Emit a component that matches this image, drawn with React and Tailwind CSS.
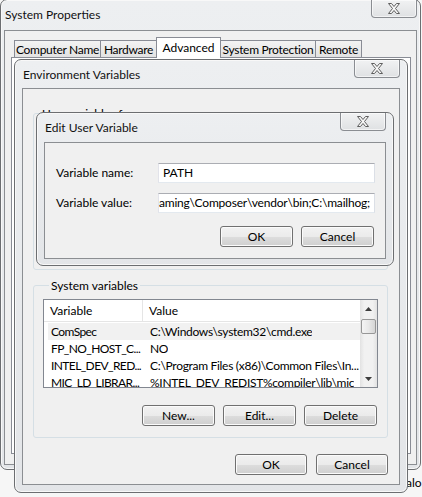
import React from "react";

const tabs = [
  { label: "Computer Name", cls: "w-[87px]" },
  { label: "Hardware", cls: "w-[57px]" },
  { label: "Advanced", cls: "w-[65px]", active: true },
  { label: "System Protection", cls: "w-[96px]" },
  { label: "Remote", cls: "w-[47px]" },
];

const rows = [
  ["ComSpec", "C:\\Windows\\system32\\cmd.exe", true],
  ["FP_NO_HOST_C...", "NO"],
  ["INTEL_DEV_RED...", "C:\\Program Files (x86)\\Common Files\\In..."],
  ["MIC_LD_LIBRAR...", "%INTEL_DEV_REDIST%compiler\\lib\\mic"],
];

const CloseGlyph = () => (
  <svg width="14" height="11" viewBox="0 0 14 11">
    <path
      d="M1.5 0.5h3l2.5 3 2.5-3h3l-4 5 4 5h-3l-2.5-3-2.5 3h-3l4-5z"
      fill="#f7f7f7"
      stroke="#5e5e5e"
      strokeWidth="1"
    />
  </svg>
);

const CloseButton = () => (
  <div className="flex h-[18px] w-[46px] items-center justify-center rounded-b-[4px] border border-t-0 border-[#8a8d92] bg-[linear-gradient(#f1f2f3,#dfe1e3)] shadow-[inset_0_0_0_1px_rgba(255,255,255,0.6)]">
    <CloseGlyph />
  </div>
);

const Win = ({ className, titleClass, title, children }) => (
  <div
    className={`absolute flex flex-col rounded-[7px] border border-[#6c6e71] bg-[linear-gradient(#edeff1,#e3e5e8)] shadow-[inset_0_0_0_1px_#f8f8f8] ${className}`}
  >
    <div className={`flex shrink-0 items-start justify-between ${titleClass}`}>
      <span className="whitespace-nowrap pl-[1px] pt-[7px] text-[12px] leading-[15px] text-[#111]">{title}</span>
      <CloseButton />
    </div>
    <div className="flex min-h-0 flex-1 flex-col border border-[#8b8e92] bg-[#f0f0f0]">{children}</div>
  </div>
);

const Btn = ({ children, className = "" }) => (
  <button
    className={`h-[21px] rounded-[3px] border border-[#707070] bg-[linear-gradient(#f2f2f2_0%,#ebebeb_50%,#dddddd_51%,#cfcfcf_100%)] text-[12px] leading-none text-black shadow-[inset_0_0_0_1px_#fbfbfb] ${className}`}
  >
    {children}
  </button>
);

const Field = ({ children, end }) => (
  <div
    className={`flex h-[20px] w-[217px] items-center overflow-hidden border border-[#abadb3] border-b-[#e3e9ef] border-l-[#e2e3ea] border-r-[#dbdfe6] bg-white px-[4px] ${end ? "justify-end tracking-[-0.2px]" : ""}`}
  >
    <span className="shrink-0 whitespace-nowrap">{children}</span>
  </div>
);

const Scrollbar = () => (
  <div className="flex w-[17px] shrink-0 flex-col items-center bg-[linear-gradient(90deg,#e2e2e2,#f1f1f1_25%,#f1f1f1_75%,#e2e2e2)]">
    <div className="flex h-[17px] w-full items-center justify-center">
      <svg width="7" height="4" viewBox="0 0 7 4">
        <path d="M0 4L3.5 0L7 4Z" fill="#3c3c3c" />
      </svg>
    </div>
    <div className="mt-[2px] h-[15px] w-[15px] rounded-[2px] border border-[#979797] bg-[linear-gradient(90deg,#f4f4f4,#e8e8e8_50%,#d5d5d5)]" />
    <div className="flex-1" />
    <div className="flex h-[17px] w-full items-center justify-center">
      <svg width="7" height="4" viewBox="0 0 7 4">
        <path d="M0 0L3.5 4L7 0Z" fill="#3c3c3c" />
      </svg>
    </div>
  </div>
);

export default function App() {
  return (
    <div className="relative h-[497px] w-[422px] overflow-hidden bg-[#f6f6f6] font-['Lato',sans-serif] text-[12px] text-black">
      <span className="absolute left-[406px] top-[475px] leading-[15px]">alo</span>

      {/* System Properties */}
      <Win
        className="left-0 top-[-1px] h-[471px] w-[421px] px-[3px] pb-[4px]"
        titleClass="h-[30px]"
        title="System Properties"
      >
        <div className="flex flex-1 flex-col pb-[10px] pl-[6px] pr-[5px] pt-[6px]">
          <div className="flex items-end pl-[3px]">
            {tabs.map((t) =>
              t.active ? (
                <div
                  key={t.label}
                  className={`relative z-10 -mb-px -ml-px h-[21px] whitespace-nowrap border border-b-0 border-[#898c95] bg-white pt-[2px] text-center leading-[15px] ${t.cls}`}
                >
                  {t.label}
                </div>
              ) : (
                <div
                  key={t.label}
                  className={`-ml-px flex h-[17px] justify-center whitespace-nowrap border border-b-0 border-[#898c95] bg-[linear-gradient(#f3f3f3,#e2e2e2)] pt-[1px] leading-[15px] tracking-[-0.3px] first:ml-0 ${t.cls}`}
                >
                  {t.label}
                </div>
              )
            )}
          </div>
          <div className="flex-1 border border-[#898c95] bg-white" />
        </div>
      </Win>

      {/* Environment Variables */}
      <Win
        className="left-[14px] top-[59px] h-[434px] w-[394px] px-[7px] pb-[7px] shadow-[0_0_5px_rgba(0,0,0,0.3)]"
        titleClass="h-[28px]"
        title="Environment Variables"
      >
        <div className="flex flex-col pl-[10px] pr-[11px] pt-[17px]">
          <fieldset className="h-[164px] rounded-[3px] border border-[#d5dfe5]">
            <legend className="ml-[6px] px-[2px] leading-[15px]">User variables for user</legend>
          </fieldset>

          <fieldset className="mt-[8px] rounded-[3px] border border-[#d5dfe5] px-[9px] pb-[11px]">
            <legend className="ml-[6px] px-[2px] leading-[15px]">System variables</legend>
            <div className="mt-[6px] flex h-[89px] overflow-hidden border border-[#828790] bg-white">
              <div className="flex min-w-0 flex-1 flex-col">
                <div className="flex h-[22px] shrink-0 border-b border-[#e5e5e5] bg-white">
                  <div className="flex w-[99px] items-center border-r border-[#e5e5e5] pl-[6px]">Variable</div>
                  <div className="flex items-center pl-[6px]">Value</div>
                </div>
                <div className="flex flex-col pl-[4px] pt-[1px]">
                  {rows.map(([name, value, sel]) => (
                    <div
                      key={name}
                      className={`flex h-[17px] shrink-0 items-center whitespace-nowrap leading-[14px] ${sel ? "bg-[#f1f1f1]" : ""}`}
                    >
                      <span className="w-[95px] shrink-0 overflow-hidden pl-[3px] tracking-[-0.6px]">{name}</span>
                      <span className="overflow-hidden pl-[7px] tracking-[-0.3px]">{value}</span>
                    </div>
                  ))}
                </div>
              </div>
              <Scrollbar />
            </div>
            <div className="mt-[17px] flex justify-end gap-[8px] pr-[1px]">
              <Btn className="w-[73px]">New...</Btn>
              <Btn className="w-[73px]">Edit...</Btn>
              <Btn className="w-[73px]">Delete</Btn>
            </div>
          </fieldset>

          <div className="mt-[16px] flex justify-end gap-[9px]">
            <Btn className="w-[72px]">OK</Btn>
            <Btn className="w-[72px]">Cancel</Btn>
          </div>
        </div>
      </Win>

      {/* Edit User Variable */}
      <Win
        className="left-[36px] top-[112px] h-[154px] w-[358px] px-[7px] pb-[6px] shadow-[0_1px_7px_rgba(0,0,0,0.5)]"
        titleClass="h-[29px]"
        title="Edit User Variable"
      >
        <div className="flex flex-col pl-[11px] pr-[10px] pt-[20px]">
          <div className="flex items-center">
            <span className="w-[102px] shrink-0">Variable name:</span>
            <Field>PATH</Field>
          </div>
          <div className="mt-[10px] flex items-center">
            <span className="w-[102px] shrink-0">Variable value:</span>
            <Field end>Roaming\Composer\vendor\bin;C:\mailhog;</Field>
          </div>
          <div className="mt-[13px] flex justify-end gap-[8px] pr-[1px]">
            <Btn className="w-[73px]">OK</Btn>
            <Btn className="w-[73px]">Cancel</Btn>
          </div>
        </div>
      </Win>
    </div>
  );
}
